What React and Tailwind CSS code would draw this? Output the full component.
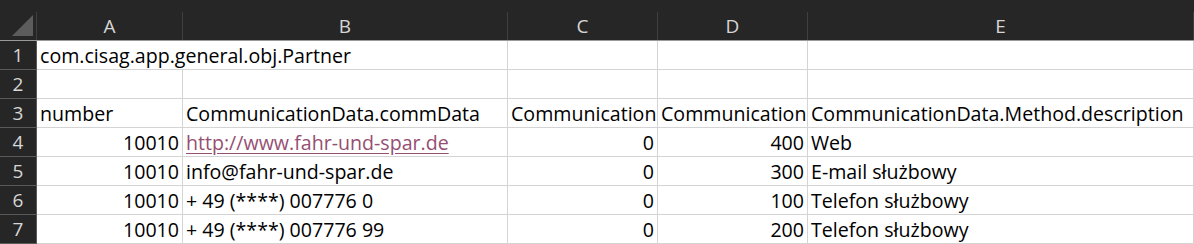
import React from "react"

const cols = ["A", "B", "C", "D", "E"]

const rows = [
  [{ t: "com.cisag.app.general.obj.Partner", span: 2 }, null, { t: "" }, { t: "" }, { t: "" }],
  [{ t: "" }, { t: "" }, { t: "" }, { t: "" }, { t: "" }],
  [
    { t: "number" },
    { t: "CommunicationData.commData" },
    { t: "Communication" },
    { t: "Communication" },
    { t: "CommunicationData.Method.description" },
  ],
  [
    { t: "10010", r: true },
    { t: "http://www.fahr-und-spar.de", link: true },
    { t: "0", r: true },
    { t: "400", r: true },
    { t: "Web" },
  ],
  [
    { t: "10010", r: true },
    { t: "info@fahr-und-spar.de" },
    { t: "0", r: true },
    { t: "300", r: true },
    { t: "E-mail służbowy" },
  ],
  [
    { t: "10010", r: true },
    { t: "+ 49 (****) 007776 0" },
    { t: "0", r: true },
    { t: "100", r: true },
    { t: "Telefon służbowy" },
  ],
  [
    { t: "10010", r: true },
    { t: "+ 49 (****) 007776 99" },
    { t: "0", r: true },
    { t: "200", r: true },
    { t: "Telefon służbowy" },
  ],
]

function Cell({ cell }) {
  if (!cell) return null
  return (
    <div
      className={`h-[29px] border-r border-b border-[#d4d4d4] flex items-end whitespace-nowrap overflow-hidden leading-[26px] ${
        cell.span === 2 ? "col-span-2" : ""
      } ${cell.r ? "justify-end pr-[3px]" : "pl-[3px]"}`}
    >
      <span className={cell.link ? "text-[#954f72] underline underline-offset-[3px]" : "text-black"}>{cell.t}</span>
    </div>
  )
}

export default function App() {
  return (
    <div
      className="w-[1194px] h-[244px] bg-white overflow-hidden text-[19.6px]"
      style={{ fontFamily: '"Open Sans", "Noto Sans", sans-serif' }}
    >
      <div className="grid grid-cols-[37px_146px_325px_150px_150px_386px]">
        {/* header row */}
        <div className="h-[41px] bg-[#262626] border-b border-[#9a9a9a] pt-[12px]">
          <div className="h-[28px] border-r border-[#3f3f3f] relative">
            <svg className="absolute left-[12px] top-[3px]" width="22" height="22" viewBox="0 0 22 22">
              <polygon points="21,0 21,21 0,21" fill="#5c5c5c" />
            </svg>
          </div>
        </div>
        {cols.map((c) => (
          <div key={c} className="h-[41px] bg-[#262626] border-b border-[#9a9a9a] pt-[12px]">
            <div className="h-[28px] border-r border-[#3f3f3f] flex items-center justify-center text-[#d6d6d6] text-[19px]">
              {c}
            </div>
          </div>
        ))}

        {rows.map((row, i) => (
          <React.Fragment key={i}>
            <div className="h-[29px] bg-[#262626] border-b border-r border-[#5a5a5a] flex items-center justify-center text-[#d6d6d6] text-[19px]">
              {i + 1}
            </div>
            {row.map((cell, j) => (
              <Cell key={j} cell={cell} />
            ))}
          </React.Fragment>
        ))}
      </div>
    </div>
  )
}
